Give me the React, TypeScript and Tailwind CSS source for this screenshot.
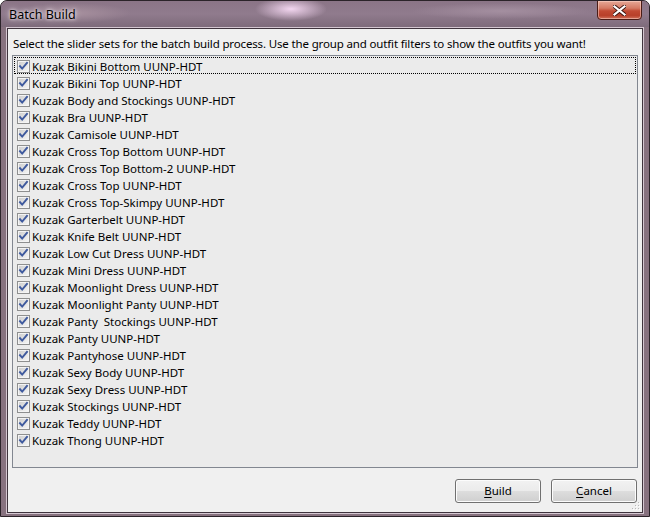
import React from "react";

const outfits = [
  "Kuzak Bikini Bottom UUNP-HDT",
  "Kuzak Bikini Top UUNP-HDT",
  "Kuzak Body and Stockings UUNP-HDT",
  "Kuzak Bra UUNP-HDT",
  "Kuzak Camisole UUNP-HDT",
  "Kuzak Cross Top Bottom UUNP-HDT",
  "Kuzak Cross Top Bottom-2 UUNP-HDT",
  "Kuzak Cross Top UUNP-HDT",
  "Kuzak Cross Top-Skimpy UUNP-HDT",
  "Kuzak Garterbelt UUNP-HDT",
  "Kuzak Knife Belt UUNP-HDT",
  "Kuzak Low Cut Dress UUNP-HDT",
  "Kuzak Mini Dress UUNP-HDT",
  "Kuzak Moonlight Dress UUNP-HDT",
  "Kuzak Moonlight Panty UUNP-HDT",
  "Kuzak Panty  Stockings UUNP-HDT",
  "Kuzak Panty UUNP-HDT",
  "Kuzak Pantyhose UUNP-HDT",
  "Kuzak Sexy Body UUNP-HDT",
  "Kuzak Sexy Dress UUNP-HDT",
  "Kuzak Stockings UUNP-HDT",
  "Kuzak Teddy UUNP-HDT",
  "Kuzak Thong UUNP-HDT",
];

function CheckBox() {
  return (
    <svg width="13" height="13" viewBox="0 0 13 13" className="shrink-0">
      <defs>
        <linearGradient id="cbFill" x1="0" y1="0" x2="1" y2="1">
          <stop offset="0" stopColor="#cfcfcf" />
          <stop offset="1" stopColor="#f4f4f4" />
        </linearGradient>
      </defs>
      <rect x="0.5" y="0.5" width="12" height="12" fill="#f4f4f4" stroke="#8e8f8f" />
      <rect x="2" y="2" width="9" height="9" fill="url(#cbFill)" />
      <path
        d="M3 6.2 L5.2 8.6 L10 2.8"
        fill="none"
        stroke="#3f5a9e"
        strokeWidth="1.9"
        strokeLinecap="square"
      />
    </svg>
  );
}

function CloseGlyph() {
  return (
    <svg width="13" height="11" viewBox="0 0 13 11">
      <path
        d="M1.5 1.5 L11.5 9.5 M11.5 1.5 L1.5 9.5"
        stroke="#3b1410"
        strokeWidth="4"
        strokeLinecap="square"
      />
      <path
        d="M1.5 1.5 L11.5 9.5 M11.5 1.5 L1.5 9.5"
        stroke="#ffffff"
        strokeWidth="2.2"
        strokeLinecap="square"
      />
    </svg>
  );
}

function Button({ label }: { label: string }) {
  return (
    <button className="flex h-[24px] w-[86px] items-center justify-center rounded-[3px] border border-[#707070] bg-[linear-gradient(180deg,#f2f2f2_0%,#ebebeb_48%,#dddddd_52%,#cfcfcf_100%)] text-[11.5px] text-black shadow-[inset_0_0_0_1px_#fcfcfc]">
      <span className="underline decoration-1 underline-offset-2">{label[0]}</span>
      <span>{label.slice(1)}</span>
    </button>
  );
}

export default function App() {
  return (
    <div
      className="flex h-[517px] w-[650px] flex-col overflow-hidden rounded-t-[7px] border border-[#2b2329] bg-[#87727f] text-black"
      style={{ fontFamily: '"Noto Sans", "Open Sans", sans-serif' }}
    >
      {/* caption bar */}
      <div className="relative flex h-[26px] shrink-0 items-start bg-[radial-gradient(ellipse_36px_12px_at_290px_8px,#f3d6f0,transparent),radial-gradient(ellipse_60px_10px_at_70px_12px,#a8919f,transparent),radial-gradient(ellipse_90px_8px_at_500px_10px,#a48fa0,transparent),linear-gradient(180deg,#8b7587_0%,#907b8d_50%,#7e6b7b_100%)]">
        <span className="ml-[8px] mt-[6px] text-[12.5px] leading-[16px] text-black [text-shadow:0_0_6px_#f6eef4,0_0_3px_#f6eef4]">
          Batch Build
        </span>
        <div className="absolute right-[7px] top-[-1px] flex h-[20px] w-[45px] items-center justify-center rounded-b-[4px] border border-[#4a1c16] bg-[linear-gradient(180deg,#e6a897_0%,#d47a64_40%,#c24a33_55%,#b8402a_80%,#d0705a_100%)] shadow-[inset_0_0_0_1px_rgba(255,220,210,0.5)]">
          <CloseGlyph />
        </div>
      </div>

      {/* client area */}
      <div className="mx-[5px] mb-[2px] flex min-h-0 flex-1 flex-col border border-[#d4c7d1]">
        <div className="relative flex min-h-0 flex-1 flex-col border border-[#3f343d] bg-[#f0f0f0] px-[4px]">
          <p className="mt-[6px] h-[17px] whitespace-nowrap pl-px text-[11.5px] leading-[17px] tracking-[-0.15px]">
            Select the slider sets for the batch build process. Use the group and outfit filters to show the outfits you want!
          </p>
          <div className="mt-[3px] h-[413px] border border-[#828790] bg-[#ebebeb] p-px">
            {outfits.map((name, i) => (
              <div
                key={name}
                className={
                  "flex h-[17px] items-center gap-[2px] pl-px " +
                  (i === 0 ? "border border-dotted border-black" : "border border-transparent")
                }
              >
                <span className="ml-px mt-px flex">
                  <CheckBox />
                </span>
                <span className="mt-[2px] whitespace-pre text-[11.5px] leading-[15px]">{name}</span>
              </div>
            ))}
          </div>
          <div className="mt-[11px] flex justify-end gap-[10px] pr-px">
            <Button label="Build" />
            <Button label="Cancel" />
          </div>
          {/* size grip */}
          <svg className="absolute bottom-[1px] right-[1px]" width="10" height="10" viewBox="0 0 10 10">
            {[
              [8, 2],
              [8, 5],
              [5, 5],
              [8, 8],
              [5, 8],
              [2, 8],
            ].map(([x, y]) => (
              <g key={`${x}-${y}`}>
                <rect x={x} y={y} width="1" height="1" fill="#ffffff" />
                <rect x={x - 1} y={y - 1} width="1" height="1" fill="#b8b8b8" />
              </g>
            ))}
          </svg>
        </div>
      </div>
    </div>
  );
}
